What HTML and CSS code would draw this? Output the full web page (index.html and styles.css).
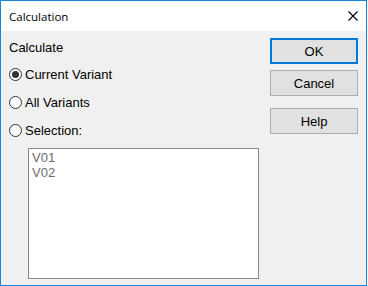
FILE: index.html
```html
<!DOCTYPE html>
<html lang="en">
<head>
    <meta charset="UTF-8">
    <title>Calculation</title>
    <link rel="stylesheet" href="styles.css">
</head>
<body>
    <div class="window">
        <div class="title-bar">
            <span class="title">Calculation</span>
            <svg class="close" width="10" height="10" viewBox="0 0 10 10">
                <path d="M0.5 0.5 L9.5 9.5 M9.5 0.5 L0.5 9.5" stroke="#000" stroke-width="1.1" fill="none"/>
            </svg>
        </div>

        <div class="content">
            <div class="options">
                <div class="group-label">Calculate</div>
                <label class="radio-row">
                    <span class="radio checked"></span>
                    <span>Current Variant</span>
                </label>
                <label class="radio-row">
                    <span class="radio"></span>
                    <span>All Variants</span>
                </label>
                <label class="radio-row">
                    <span class="radio"></span>
                    <span>Selection:</span>
                </label>
                <div class="listbox">
                    <div class="item">V01</div>
                    <div class="item">V02</div>
                </div>
            </div>

            <div class="buttons">
                <button class="btn default">OK</button>
                <button class="btn">Cancel</button>
                <button class="btn help">Help</button>
            </div>
        </div>
    </div>
</body>
</html>
```

FILE: styles.css
```css
* {
    margin: 0;
    padding: 0;
    box-sizing: border-box;
}

body {
    background: #fff;
    font-family: 'Liberation Sans', Arial, sans-serif;
    font-size: 13px;
    line-height: 15px;
    color: #000;
}

.window {
    width: 367px;
    height: 286px;
    border: 1px solid #1883d7;
    background: #f0f0f0;
    display: flex;
    flex-direction: column;
}

.title-bar {
    height: 30px;
    background: #fff;
    display: flex;
    align-items: center;
    justify-content: space-between;
    padding: 0 8px 0 8px;
}

.title {
    font-family: 'Open Sans', 'Noto Sans', sans-serif;
    font-size: 11.5px;
    color: #000;
}

.close {
    display: block;
}

.content {
    flex: 1;
    display: flex;
    justify-content: space-between;
    padding: 7px 8px 0 8px;
}

.options {
    display: flex;
    flex-direction: column;
    padding-top: 2px;
}

.group-label {
    margin-bottom: 5px;
}

.radio-row {
    height: 28px;
    display: flex;
    align-items: center;
    gap: 3px;
}

.radio {
    width: 13px;
    height: 13px;
    border: 1px solid #333;
    border-radius: 50%;
    background: #fff;
    display: flex;
    align-items: center;
    justify-content: center;
}

.radio.checked::after {
    content: '';
    width: 7px;
    height: 7px;
    border-radius: 50%;
    background: #333;
}

.listbox {
    margin: 4px 0 0 19px;
    width: 231px;
    height: 131px;
    border: 1px solid #828790;
    background: #fff;
    padding: 1px 3px;
}

.item {
    color: #6d6d6d;
}

.buttons {
    display: flex;
    flex-direction: column;
}

.btn {
    width: 88px;
    height: 26px;
    font-family: 'Liberation Sans', Arial, sans-serif;
    font-size: 13px;
    color: #000;
    background: #e1e1e1;
    border: 1px solid #adadad;
    margin-bottom: 6px;
}

.btn.default {
    border: 2px solid #0078d7;
}

.btn.help {
    margin-top: 6px;
}
```
